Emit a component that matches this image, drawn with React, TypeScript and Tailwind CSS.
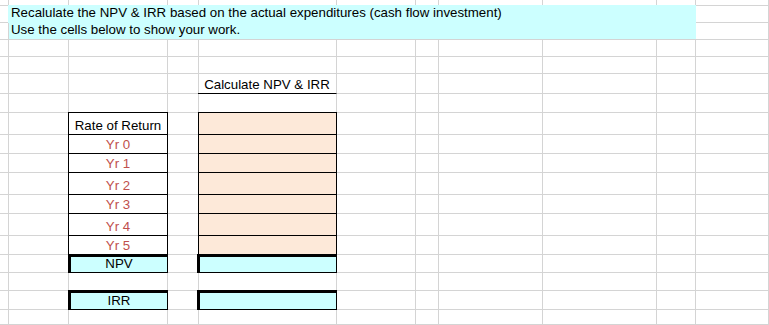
const FONT = { fontFamily: '"Liberation Sans", Arial, sans-serif' };

type CellProps = { className?: string; children?: React.ReactNode };

// plain spreadsheet cell: grey grid line on the right and bottom, text bottom aligned
function Cell({ className = '', children }: CellProps) {
  return (
    <div className={`flex items-end justify-center pb-px text-[13.3px] leading-[15px] whitespace-nowrap border-r border-b ${className || 'border-[#d4d4d4]'}`}>
      {children}
    </div>
  );
}

const TOTAL_COLS = 11;

function BlankRow({ skip = [] as number[] }) {
  return (
    <>
      {Array.from({ length: TOTAL_COLS }).map((_, c) =>
        skip.includes(c) ? null : <Cell key={c} />
      )}
    </>
  );
}

export default function App() {
  const years = [
    { label: 'Yr 0' },
    { label: 'Yr 1' },
    { label: 'Yr 2' },
    { label: 'Yr 3' },
    { label: 'Yr 4' },
    { label: 'Yr 5' },
  ];

  const tail = (from: number) =>
    Array.from({ length: TOTAL_COLS - from }).map((_, i) => <Cell key={`t${from + i}`} />);

  return (
    <div className="w-[769px] h-[325px] overflow-hidden bg-white text-black" style={FONT}>
      <div className="grid grid-cols-[9px_60px_99px_31px_138px_79px_23px_104px_114px_39px_73px] grid-rows-[6px_17px_17px_17px_17px_20px_19px_22px_19px_19px_22px_19px_22px_19px_18px_18px_19px_15px]">
        {/* row 0 */}
        <BlankRow />

        {/* rows 1-2: instructions banner */}
        <Cell />
        <div className="col-span-9 row-span-2 -ml-px -mt-px bg-[#ccffff] border-b border-[#d4d4d4] flex flex-col text-[13.3px] leading-[15px] whitespace-nowrap pl-[3px]">
          <div className="h-[17px] flex items-end pb-[2px]">
            Recalulate the NPV &amp; IRR based on the actual expenditures (cash flow investment)
          </div>
          <div className="h-[17px] flex items-end pb-[2px]">Use the cells below to show your work.</div>
        </div>
        <Cell />
        <Cell />
        <Cell />

        {/* rows 3-4 */}
        <BlankRow />
        <BlankRow />

        {/* row 5: heading */}
        <Cell />
        <Cell />
        <Cell />
        <Cell />
        <Cell className="-ml-px border-r-[#d4d4d4] border-b-black">Calculate NPV &amp; IRR</Cell>
        {tail(5)}

        {/* row 6 */}
        <BlankRow />

        {/* row 7: rate of return header */}
        <Cell />
        <Cell />
        <Cell className="-ml-px -mt-px border border-black bg-white">Rate of Return</Cell>
        <Cell />
        <Cell className="-ml-px -mt-px border border-black bg-[#fde9d9]" />
        {tail(5)}

        {/* rows 8-13: years */}
        {years.map((y) => (
          <div key={y.label} className="contents">
            <Cell />
            <Cell />
            <Cell className="-ml-px -mt-px border border-black bg-white text-[#c0504d]">{y.label}</Cell>
            <Cell />
            <Cell className="-ml-px -mt-px border border-black bg-[#fde9d9]" />
            {tail(5)}
          </div>
        ))}

        {/* row 14: NPV */}
        <Cell />
        <Cell />
        <Cell className="-ml-px -mt-px border-[3px] border-black bg-[#ccffff] pb-0">NPV</Cell>
        <Cell />
        <Cell className="-ml-[2px] -mt-px border-[3px] border-black bg-[#ccffff]" />
        {tail(5)}

        {/* row 15 */}
        <BlankRow />

        {/* row 16: IRR */}
        <Cell />
        <Cell />
        <Cell className="-ml-px -mt-px border-[3px] border-black bg-[#ccffff] pb-0">IRR</Cell>
        <Cell />
        <Cell className="-ml-[2px] -mt-px border-[3px] border-black bg-[#ccffff]" />
        {tail(5)}

        {/* row 17 */}
        <BlankRow />
      </div>
    </div>
  );
}
